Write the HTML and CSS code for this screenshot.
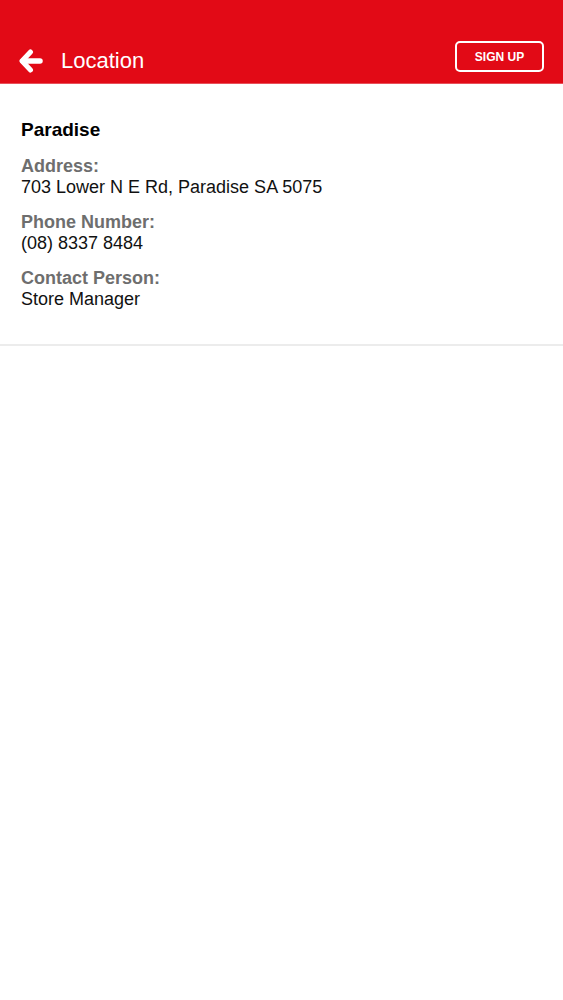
FILE: index.html
```html
<!DOCTYPE html>
<html lang="en">
<head>
    <meta charset="UTF-8">
    <meta name="viewport" content="width=device-width, initial-scale=1.0">
    <title>Location</title>
    <link rel="stylesheet" href="styles.css">
</head>
<body>
    <header class="topbar">
        <a class="back" href="#">
            <svg width="24" height="24" viewBox="0 0 24 24">
                <polyline points="11.5,3 3,12 11.5,21" fill="none" stroke="#fff" stroke-width="5" stroke-linecap="round" stroke-linejoin="round"/>
                <line x1="4" y1="12" x2="21" y2="12" stroke="#fff" stroke-width="5.5" stroke-linecap="round"/>
            </svg>
        </a>
        <span class="title">Location</span>
        <button class="signup">SIGN UP</button>
    </header>

    <section class="store">
        <h2 class="store-name">Paradise</h2>
        <div class="field">
            <div class="label">Address:</div>
            <div class="value">703 Lower N E Rd, Paradise SA 5075</div>
        </div>
        <div class="field">
            <div class="label">Phone Number:</div>
            <div class="value">(08) 8337 8484</div>
        </div>
        <div class="field">
            <div class="label">Contact Person:</div>
            <div class="value">Store Manager</div>
        </div>
    </section>
</body>
</html>
```

FILE: styles.css
```css
body {
    margin: 0;
    font-family: 'Liberation Sans', Arial, sans-serif;
    background: #fff;
    color: #111;
}
.topbar {
    background-color: #e20a16;
    height: 84px;
    box-sizing: border-box;
    display: flex;
    align-items: flex-end;
    padding: 0 19px 11px;
    border-bottom: 1px solid #e8505a;
}
.back {
    display: flex;
    width: 24px;
    height: 24px;
    margin-bottom: -1px;
}
.title {
    color: #fff;
    font-size: 22px;
    line-height: 26px;
    margin-left: 18px;
    margin-bottom: -2px;
    flex: 1;
}
.signup {
    background: transparent;
    color: #fff;
    border: 2px solid #fff;
    border-radius: 5px;
    font-family: 'Liberation Sans', Arial, sans-serif;
    font-weight: bold;
    font-size: 12px;
    width: 89px;
    height: 31px;
    padding: 0;
    margin-bottom: 0;
}
.store {
    padding: 35px 21px 34px;
    border-bottom: 2px solid #ececec;
}
.store-name {
    font-size: 19px;
    line-height: 22px;
    margin: 0 0 15px;
    font-weight: bold;
    color: #000;
}
.field {
    font-size: 18px;
    line-height: 21px;
    margin-bottom: 14px;
}
.field:last-child {
    margin-bottom: 0;
}
.label {
    font-weight: bold;
    color: #6e6e6e;
}
.value {
    color: #111;
}
```
